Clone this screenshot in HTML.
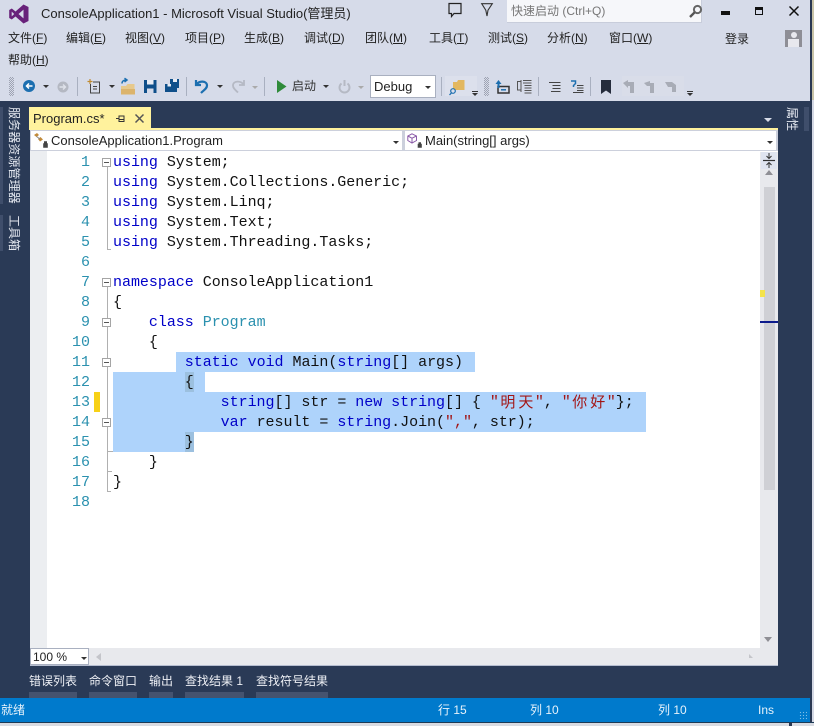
<!DOCTYPE html>
<html lang="zh"><head><meta charset="utf-8"><title>ConsoleApplication1 - Microsoft Visual Studio</title>
<style>
html,body{margin:0;padding:0}
body{width:814px;height:726px;overflow:hidden;position:relative;background:#d6dbe9;font-family:"Liberation Sans","Noto Sans CJK SC",sans-serif;color:#1e1e1e}
.a{position:absolute}
.m{position:absolute;font-size:12px;line-height:16px;top:30px;white-space:nowrap;color:#222}
.m u{text-underline-offset:1px}
.l{position:absolute;left:0;height:20px;line-height:20px;font-family:"Liberation Mono","Noto Sans CJK SC",monospace;font-size:15px;white-space:pre;color:#111;letter-spacing:-.03px;overflow:visible}
.n{position:absolute;width:40px;left:50px;text-align:right;height:20px;line-height:20px;font-family:"Liberation Mono",monospace;font-size:15px;color:#2b91af}
.k{color:#0000c8}.t{color:#2b91af}.s{color:#a31515}
.z{display:inline-block;width:18px;height:20px;line-height:18px;vertical-align:top;text-align:center;font-size:15px;font-family:"Noto Sans CJK SC",sans-serif;letter-spacing:0}
.sel{position:absolute;background:#aed3fb}
.box{position:absolute;left:102px;width:7px;height:7px;border:1px solid #a5a5a5;background:#fff}
.box:after{content:"";position:absolute;left:1px;top:3px;width:5px;height:1px;background:#555}
.v{position:absolute;writing-mode:vertical-rl;text-orientation:sideways;font-size:12px;color:#e4e8f0;white-space:nowrap}
.b{position:absolute;top:674px;font-size:12px;line-height:15px;color:#eef0f5;white-space:nowrap}
.bi{position:absolute;top:692px;height:6px;background:#45536f}
.st{position:absolute;top:703px;font-size:12px;line-height:15px;color:#e6f2fb;white-space:nowrap}
svg{position:absolute;overflow:visible}
.dr{position:absolute;width:0;height:0;border-left:3px solid transparent;border-right:3px solid transparent;border-top:3px solid #333}
.dg{border-top-color:#aaa}
.sep{position:absolute;top:77px;width:1px;height:19px;background:#a9b0c0}
.grip{position:absolute;top:77px;width:5px;height:19px;background:repeating-conic-gradient(#9ea3b2 0 25%,transparent 0 50%) 0 0/2px 2px}
</style></head><body>

<!-- window right edge -->
<div class="a" style="left:810px;top:0;width:4px;height:726px;background:#2a3852"></div>
<div class="a" style="left:812px;top:100px;width:2px;height:626px;background:#d4d8e4"></div>
<div class="a" style="left:812px;top:0;width:2px;height:100px;background:#c9c4a8"></div>

<!-- VS logo -->
<svg style="left:9px;top:4px" width="20" height="20" viewBox="0 0 20 20"><path d="M14.5 0.5 L19.5 3 V17 L14.5 19.5 L6.5 12.5 L2.8 15.5 L0.2 14 V6 L2.8 4.5 L6.5 7.5 Z M14.5 5.6 L9.5 10 L14.5 14.4 Z M2.7 7.6 V12.4 L5.2 10 Z" fill="#68217a" fill-rule="evenodd"/></svg>
<div class="a" style="left:41px;top:5px;font-size:13px;line-height:17px;white-space:nowrap;color:#222">ConsoleApplication1 - Microsoft Visual Studio(管理员)</div>

<!-- feedback/filter -->
<svg style="left:447px;top:2px" width="16" height="16" viewBox="0 0 16 16"><path d="M2 1.5H14V11.5H7L4.5 14.5V11.5H2Z" fill="none" stroke="#222" stroke-width="1.2"/></svg>
<svg style="left:481px;top:3px" width="12" height="14" viewBox="0 0 12 14"><path d="M.7 .7H11.3L7 7.2 6 13 4.800 7.200Z" fill="none" stroke="#333" stroke-width="1.1"/></svg>

<!-- quick launch -->
<div class="a" style="left:507px;top:0;width:194px;height:22px;background:#f6f7fa;border-right:1px solid #c8cddb;border-bottom:1px solid #c8cddb"></div>
<div class="a" style="left:511px;top:4px;font-size:12px;line-height:15px;color:#777;white-space:nowrap">快速启动 (Ctrl+Q)</div>
<svg style="left:688px;top:4px" width="15" height="15" viewBox="0 0 15 15"><circle cx="9.5" cy="5.5" r="3.6" fill="none" stroke="#666" stroke-width="2"/><path d="M6.8 8.2L2 13" stroke="#555" stroke-width="2.4"/></svg>

<!-- window buttons -->
<div class="a" style="left:721px;top:11px;width:9px;height:4px;background:#111"></div>
<div class="a" style="left:755px;top:7px;width:6px;height:4px;border:1.5px solid #111;border-top-width:3px"></div>
<svg style="left:789px;top:6px" width="10" height="10" viewBox="0 0 10 10"><path d="M.5 .5L9.500 9.500M9.500 .5L.5 9.500" stroke="#111" stroke-width="1.500"/></svg>

<!-- menu -->
<div class="m" style="left:8px">文件(<u>F</u>)</div>
<div class="m" style="left:66px">编辑(<u>E</u>)</div>
<div class="m" style="left:125px">视图(<u>V</u>)</div>
<div class="m" style="left:185px">项目(<u>P</u>)</div>
<div class="m" style="left:244px">生成(<u>B</u>)</div>
<div class="m" style="left:304px">调试(<u>D</u>)</div>
<div class="m" style="left:365px">团队(<u>M</u>)</div>
<div class="m" style="left:429px">工具(<u>T</u>)</div>
<div class="m" style="left:488px">测试(<u>S</u>)</div>
<div class="m" style="left:547px">分析(<u>N</u>)</div>
<div class="m" style="left:609px">窗口(<u>W</u>)</div>
<div class="m" style="left:725px;top:31px">登录</div>
<div class="m" style="left:8px;top:52px">帮助(<u>H</u>)</div>
<div class="a" style="left:785px;top:30px;width:17px;height:17px;background:#8e8e96"></div>
<div class="a" style="left:791px;top:32px;width:6px;height:6px;border-radius:3px;background:#e8e8ee"></div>
<div class="a" style="left:788px;top:39px;width:11px;height:8px;background:#e8e8ee"></div>

<!-- toolbar -->
<div class="grip" style="left:9px"></div>
<svg style="left:23px;top:80px" width="12" height="12" viewBox="0 0 12 12"><circle cx="6" cy="6" r="6" fill="#1c6fb0"/><path d="M9.5 6H4M6 3.5L3.5 6 6 8.500" stroke="#fff" stroke-width="1.500" fill="none"/></svg>
<div class="dr" style="left:43px;top:85px"></div>
<svg style="left:57px;top:81px" width="12" height="12" viewBox="0 0 12 12"><circle cx="6" cy="6" r="5.500" fill="#b4b8c2"/><path d="M2.500 6H8M6 3.500L8.500 6 6 8.500" stroke="#dfe2ea" stroke-width="1.400" fill="none"/></svg>
<div class="sep" style="left:77px"></div>
<svg style="left:87px;top:79px" width="14" height="15" viewBox="0 0 14 15"><path d="M3.500 5V14H12.500V3H6" fill="none" stroke="#444" stroke-width="1"/><path d="M6 7.500H10M6 10H10" stroke="#444"/><path d="M3 0V5M.5 2.500H5.500" stroke="#c08a30" stroke-width="1.200"/></svg>
<div class="dr" style="left:109px;top:85px"></div>
<svg style="left:120px;top:78px" width="16" height="17" viewBox="0 0 16 17"><path d="M1 8H6L7.500 6H14.500V16.500H1Z" fill="#e7c98c"/><path d="M1 11H15V16.500H1Z" fill="#dcb46c"/><path d="M2 5.500C2 3 4 2 6 2M4.500 .2L7 2 4.500 4" fill="none" stroke="#1c6fb0" stroke-width="1.500"/></svg>
<svg style="left:144px;top:80px" width="13" height="13" viewBox="0 0 13 13"><path d="M0 0H12.500V13H0Z" fill="#0f4f8a"/><path d="M3 0H9.500V4.500H3Z" fill="#e8ecf4"/><path d="M3 8.500H9.500V13H3Z" fill="#d6dbe9"/></svg>
<svg style="left:165px;top:79px" width="14" height="14" viewBox="0 0 14 14"><path d="M5 0H14V9H12V13H0V5H5Z" fill="#0f4f8a"/><path d="M8 0H12V3H8ZM2.500 5H6V7.500H2.500Z" fill="#e8ecf4"/></svg>
<div class="sep" style="left:186px"></div>
<svg style="left:195px;top:79px" width="14" height="15" viewBox="0 0 14 15"><path d="M1 1V6H6M1.500 5.500C4 1.500 12 1.500 12 6.500C12 9.500 9 11 6 14" fill="none" stroke="#1c6fb0" stroke-width="2.200"/></svg>
<div class="dr" style="left:217px;top:85px"></div>
<svg style="left:231px;top:79px" width="14" height="14" viewBox="0 0 14 14"><path d="M13 1V6H8M12.500 5.500C10 1.500 2 1.500 2 6.500C2 9.500 4.500 11 7 13.500" fill="none" stroke="#b5b9c4" stroke-width="1.800"/></svg>
<div class="dr dg" style="left:252px;top:86px"></div>
<div class="sep" style="left:264px"></div>
<svg style="left:277px;top:80px" width="10" height="13" viewBox="0 0 10 13"><path d="M0 0L9.500 6.500 0 13Z" fill="#2f8b3a"/></svg>
<div class="a" style="left:292px;top:79px;font-size:12px;line-height:15px;color:#333">启动</div>
<div class="dr" style="left:323px;top:85px"></div>
<svg style="left:338px;top:80px" width="13" height="13" viewBox="0 0 13 13"><path d="M3.500 3.500A5 5 0 1 0 9.500 3.500" fill="none" stroke="#b5b9c4" stroke-width="2"/><path d="M6.500 0V6" stroke="#b5b9c4" stroke-width="2"/></svg>
<div class="dr dg" style="left:358px;top:86px"></div>
<div class="a" style="left:370px;top:75px;width:64px;height:21px;background:#fff;border:1px solid #a9b0c0"></div>
<div class="a" style="left:374px;top:79px;font-size:13px;line-height:15px;color:#222">Debug</div>
<div class="dr" style="left:425px;top:86px"></div>
<div class="sep" style="left:441px"></div>
<div class="a" style="left:445px;top:76px;width:32px;height:20px;background:#dce0ec"></div>
<svg style="left:449px;top:80px" width="16" height="16" viewBox="0 0 16 16"><path d="M4 2H8L9 0H15.500V10H4Z" fill="#e2b75f"/><circle cx="4" cy="11" r="2.300" fill="#dce0ec" stroke="#1c6fb0" stroke-width="1.200"/><path d="M2.500 12.800L.5 15" stroke="#1c6fb0" stroke-width="1.300"/></svg>
<div class="a" style="left:472px;top:91px;width:6px;height:1px;background:#333"></div><div class="dr" style="left:472px;top:93px"></div>
<div class="grip" style="left:484px"></div>
<svg style="left:495px;top:80px" width="15" height="14" viewBox="0 0 15 14"><path d="M3 6.500H14V13H3Z" fill="none" stroke="#333" stroke-width="1.500"/><path d="M6 9.800H11" stroke="#1c6fb0" stroke-width="1.500"/><path d="M3.500 0L.5 4H2.500V8H4.500V4H6.500Z" fill="#1c6fb0"/></svg>
<svg style="left:517px;top:80px" width="15" height="14" viewBox="0 0 15 14"><path d="M4 1.500H.5V10H4M4 0V12" stroke="#555" fill="none"/><path d="M6 .5H14.500M6 3H14.500M7.500 5.500H14.500M7.500 8H14.500M7.500 10.500H14.500M7.500 13H14.500" stroke="#555"/></svg>
<div class="sep" style="left:538px"></div>
<svg style="left:549px;top:82px" width="12" height="10" viewBox="0 0 12 10"><path d="M0 .5H11.500M3.500 3.500H11.500M3.500 6.500H11.500M2 9.500H11.500" stroke="#444"/></svg>
<svg style="left:570px;top:80px" width="14" height="13" viewBox="0 0 14 13"><path d="M1 1H5.500V3.500L3.500 5.500V7" stroke="#1c6fb0" stroke-width="1.500" fill="none"/><path d="M7 5.500H13.500M7 8H13.500M7 10.500H13.500M3 12.500H13.500" stroke="#444"/></svg>
<div class="sep" style="left:590px"></div>
<svg style="left:601px;top:80px" width="10" height="14" viewBox="0 0 10 14"><path d="M0 0H10V14L5 10.500 0 14Z" fill="#252c3c"/></svg>
<div class="a" style="left:622px;top:76px;width:62px;height:20px;background:#d9dde9"></div>
<svg style="left:623px;top:80px" width="60" height="14" viewBox="0 0 60 14"><g fill="#a8acb6"><path d="M0 3L5 0V2H11V13H7V6H5V8Z"/><path d="M21 3L27 1V3H31V13H27V6H24Z"/><path d="M42 2H49L53 5V12H49V7H45Z"/></g></svg>
<div class="a" style="left:687px;top:91px;width:6px;height:1px;background:#333"></div><div class="dr" style="left:687px;top:93px"></div>

<!-- dark dock -->
<div class="a" style="left:0;top:101px;width:810px;height:597px;background:#2a3a56"></div>
<div class="a" style="left:0;top:107px;width:3px;height:97px;background:#3f4e6b"></div>
<div class="a" style="left:0;top:215px;width:3px;height:36px;background:#3f4e6b"></div>
<div class="a" style="left:804px;top:107px;width:5px;height:24px;background:#3f4e6b"></div>
<div class="v" style="left:6px;top:107px;letter-spacing:.1px">服务器资源管理器</div>
<div class="v" style="left:6px;top:215px">工具箱</div>
<div class="v" style="left:784px;top:107px">属性</div>

<!-- tab -->
<div class="a" style="left:29px;top:107px;width:122px;height:22px;background:#fff29d"></div>
<div class="a" style="left:33px;top:111px;font-size:13px;line-height:15px;color:#222;white-space:nowrap">Program.cs*</div>
<svg style="left:116px;top:114px" width="9" height="9" viewBox="0 0 9 9"><path d="M0 4.500H3M3 1.500V7.500H8V2H3M3 5.500H8" stroke="#333" fill="none"/></svg>
<svg style="left:135px;top:114px" width="9" height="9" viewBox="0 0 9 9"><path d="M.5 .5L8.500 8.500M8.500 .5L.5 8.500" stroke="#555" stroke-width="1.500"/></svg>
<div class="a" style="left:764px;top:118px;width:0;height:0;border-left:4px solid transparent;border-right:4px solid transparent;border-top:4px solid #d8dce8"></div>

<!-- editor frame -->
<div class="a" style="left:29px;top:128px;width:749px;height:2px;background:#fff29d"></div>
<div class="a" style="left:30px;top:130px;width:748px;height:21px;background:#ccd0dc"></div>
<div class="a" style="left:31px;top:131px;width:371px;height:19px;background:#fff"></div>
<div class="a" style="left:405px;top:131px;width:371px;height:19px;background:#fff"></div>
<svg style="left:33px;top:133px" width="15" height="15" viewBox="0 0 15 15"><path d="M1 2L4 0 6 2 3.500 4ZM5 6L7.500 4 10 6.500 7 8.500Z" fill="#c28b3a"/><path d="M3.500 3.500L7 6" stroke="#888"/><path d="M10.500 10.500H14.500V14.500H10.500ZM11.300 10.500V8.500H13.700V10.500" fill="#444" stroke="#444" stroke-width=".6"/></svg>
<div class="a" style="left:51px;top:133px;font-size:13px;line-height:15px;color:#222;white-space:nowrap">ConsoleApplication1.Program</div>
<div class="dr" style="left:393px;top:141px"></div>
<svg style="left:407px;top:133px" width="15" height="15" viewBox="0 0 15 15"><path d="M5 .8L9.500 3V7.500L5 10 .8 7.500V3ZM.8 3L5 5.200 9.500 3M5 5.200V10" fill="none" stroke="#8a5aa8"/><path d="M11 11H14.500V14.500H11ZM11.800 11V9.500H13.700V11" fill="#444" stroke="#444" stroke-width=".6"/></svg>
<div class="a" style="left:425px;top:133px;font-size:13px;line-height:15px;color:#222;white-space:nowrap">Main(string[] args)</div>
<div class="dr" style="left:767px;top:141px"></div>

<!-- code surface -->
<div class="a" style="left:30px;top:151px;width:748px;height:497px;background:#fff"></div>
<div class="a" style="left:30px;top:151px;width:17px;height:497px;background:#eceef1"></div>

<!-- selection -->
<div class="sel" style="left:176px;top:352px;width:299px;height:20px"></div>
<div class="sel" style="left:113px;top:372px;width:92px;height:20px"></div>
<div class="sel" style="left:113px;top:392px;width:533px;height:40px"></div>
<div class="sel" style="left:113px;top:432px;width:81px;height:20px"></div>
<div class="a" style="left:185px;top:372px;width:9px;height:20px;background:#9cc0df"></div>
<div class="a" style="left:185px;top:432px;width:9px;height:20px;background:#9cc0df"></div>
<div class="a" style="left:94px;top:392px;width:6px;height:20px;background:#f7d117"></div>

<!-- outline -->
<div class="a" style="left:107px;top:167px;width:1px;height:82px;background:#b0b0b0"></div>
<div class="a" style="left:107px;top:249px;width:4px;height:1px;background:#b0b0b0"></div>
<div class="a" style="left:107px;top:287px;width:1px;height:204px;background:#b0b0b0"></div>
<div class="a" style="left:107px;top:491px;width:4px;height:1px;background:#b0b0b0"></div>
<div class="a" style="left:107px;top:451px;width:6px;height:1px;background:#b0b0b0"></div>
<div class="a" style="left:107px;top:471px;width:5px;height:1px;background:#b0b0b0"></div>
<div class="box" style="top:158px"></div>
<div class="box" style="top:278px"></div>
<div class="box" style="top:318px"></div>
<div class="box" style="top:358px"></div>
<div class="box" style="top:418px"></div>

<!-- line numbers -->
<div class="n" style="top:153px">1</div><div class="n" style="top:173px">2</div><div class="n" style="top:193px">3</div><div class="n" style="top:213px">4</div><div class="n" style="top:233px">5</div><div class="n" style="top:253px">6</div><div class="n" style="top:273px">7</div><div class="n" style="top:293px">8</div><div class="n" style="top:313px">9</div><div class="n" style="top:333px">10</div><div class="n" style="top:353px">11</div><div class="n" style="top:373px">12</div><div class="n" style="top:393px">13</div><div class="n" style="top:413px">14</div><div class="n" style="top:433px">15</div><div class="n" style="top:453px">16</div><div class="n" style="top:473px">17</div><div class="n" style="top:493px">18</div>

<!-- code -->
<div class="l" style="left:113px;top:153px"><span class="k">using</span> System;</div>
<div class="l" style="left:113px;top:173px"><span class="k">using</span> System.Collections.Generic;</div>
<div class="l" style="left:113px;top:193px"><span class="k">using</span> System.Linq;</div>
<div class="l" style="left:113px;top:213px"><span class="k">using</span> System.Text;</div>
<div class="l" style="left:113px;top:233px"><span class="k">using</span> System.Threading.Tasks;</div>
<div class="l" style="left:113px;top:273px"><span class="k">namespace</span> ConsoleApplication1</div>
<div class="l" style="left:113px;top:293px">{</div>
<div class="l" style="left:113px;top:313px">    <span class="k">class</span> <span class="t">Program</span></div>
<div class="l" style="left:113px;top:333px">    {</div>
<div class="l" style="left:113px;top:353px">        <span class="k">static</span> <span class="k">void</span> Main(<span class="k">string</span>[] args)</div>
<div class="l" style="left:113px;top:373px">        {</div>
<div class="l" style="left:113px;top:393px">            <span class="k">string</span>[] str = <span class="k">new</span> <span class="k">string</span>[] { <span class="s">"<span class="z">明</span><span class="z">天</span>"</span>, <span class="s">"<span class="z">你</span><span class="z">好</span>"</span>};</div>
<div class="l" style="left:113px;top:413px">            <span class="k">var</span> result = <span class="k">string</span>.Join(<span class="s">","</span>, str);</div>
<div class="l" style="left:113px;top:433px">        }</div>
<div class="l" style="left:113px;top:453px">    }</div>
<div class="l" style="left:113px;top:473px">}</div>

<!-- vertical scrollbar -->
<div class="a" style="left:760px;top:152px;width:18px;height:496px;background:#e8e9ed"></div>
<div class="a" style="left:761px;top:152px;width:16px;height:17px;background:#dfe4f0"></div>
<svg style="left:763px;top:153px" width="12" height="15" viewBox="0 0 12 15"><path d="M0 7.500H12" stroke="#333" stroke-width="1.200"/><path d="M6 0V5M3.500 3L6 5.500 8.500 3M6 15V10M3.500 12L6 9.500 8.500 12" stroke="#333" fill="none"/></svg>
<div class="a" style="left:765px;top:170px;width:0;height:0;border-left:4.500px solid transparent;border-right:4.500px solid transparent;border-bottom:5px solid #8f8f95"></div>
<div class="a" style="left:764px;top:187px;width:11px;height:303px;background:#cfd0d5"></div>
<div class="a" style="left:760px;top:290px;width:5px;height:7px;background:#f4e34a"></div>
<div class="a" style="left:760px;top:321px;width:18px;height:2px;background:#0c1b8c"></div>
<div class="a" style="left:764px;top:637px;width:0;height:0;border-left:4.500px solid transparent;border-right:4.500px solid transparent;border-top:5px solid #8f8f95"></div>

<!-- horizontal scrollbar -->
<div class="a" style="left:30px;top:648px;width:748px;height:17px;background:#e8e9ed;border-bottom:1px solid #b5bdd0"></div>
<div class="a" style="left:30px;top:648px;width:59px;height:17px;background:#fff;border:1px solid #a9b0c0;box-sizing:border-box"></div>
<div class="a" style="left:33px;top:650px;font-size:12px;line-height:14px;color:#222">100 %</div>
<div class="dr" style="left:81px;top:657px"></div>
<div class="a" style="left:96px;top:653px;width:0;height:0;border-top:4px solid transparent;border-bottom:4px solid transparent;border-right:5px solid #c4c5ca"></div>
<div class="a" style="left:749px;top:654px;width:0;height:0;border-bottom:4px solid #c4c5ca;border-right:4px solid transparent"></div>

<!-- bottom tabs -->
<div class="b" style="left:29px">错误列表</div><div class="bi" style="left:29px;width:48px"></div>
<div class="b" style="left:89px">命令窗口</div><div class="bi" style="left:89px;width:48px"></div>
<div class="b" style="left:149px">输出</div><div class="bi" style="left:149px;width:24px"></div>
<div class="b" style="left:185px">查找结果 1</div><div class="bi" style="left:185px;width:59px"></div>
<div class="b" style="left:256px">查找符号结果</div><div class="bi" style="left:256px;width:72px"></div>

<!-- status -->
<div class="a" style="left:0;top:698px;width:810px;height:24px;background:#007acc"></div>
<div class="a" style="left:0;top:722px;width:814px;height:1px;background:#1d3a55"></div>
<div class="a" style="left:0;top:723px;width:814px;height:3px;background:#d8dbe2"></div>
<div class="a" style="left:789px;top:723px;width:3px;height:3px;background:#2a3852"></div>
<div class="st" style="left:1px">就绪</div>
<div class="st" style="left:438px">行 15</div>
<div class="st" style="left:530px">列 10</div>
<div class="st" style="left:658px">列 10</div>
<div class="st" style="left:758px">Ins</div>
<div class="a" style="left:799px;top:711px;width:8px;height:9px;background-image:radial-gradient(#7fbde6 .7px,transparent .8px);background-size:3px 3px"></div>
</body></html>
